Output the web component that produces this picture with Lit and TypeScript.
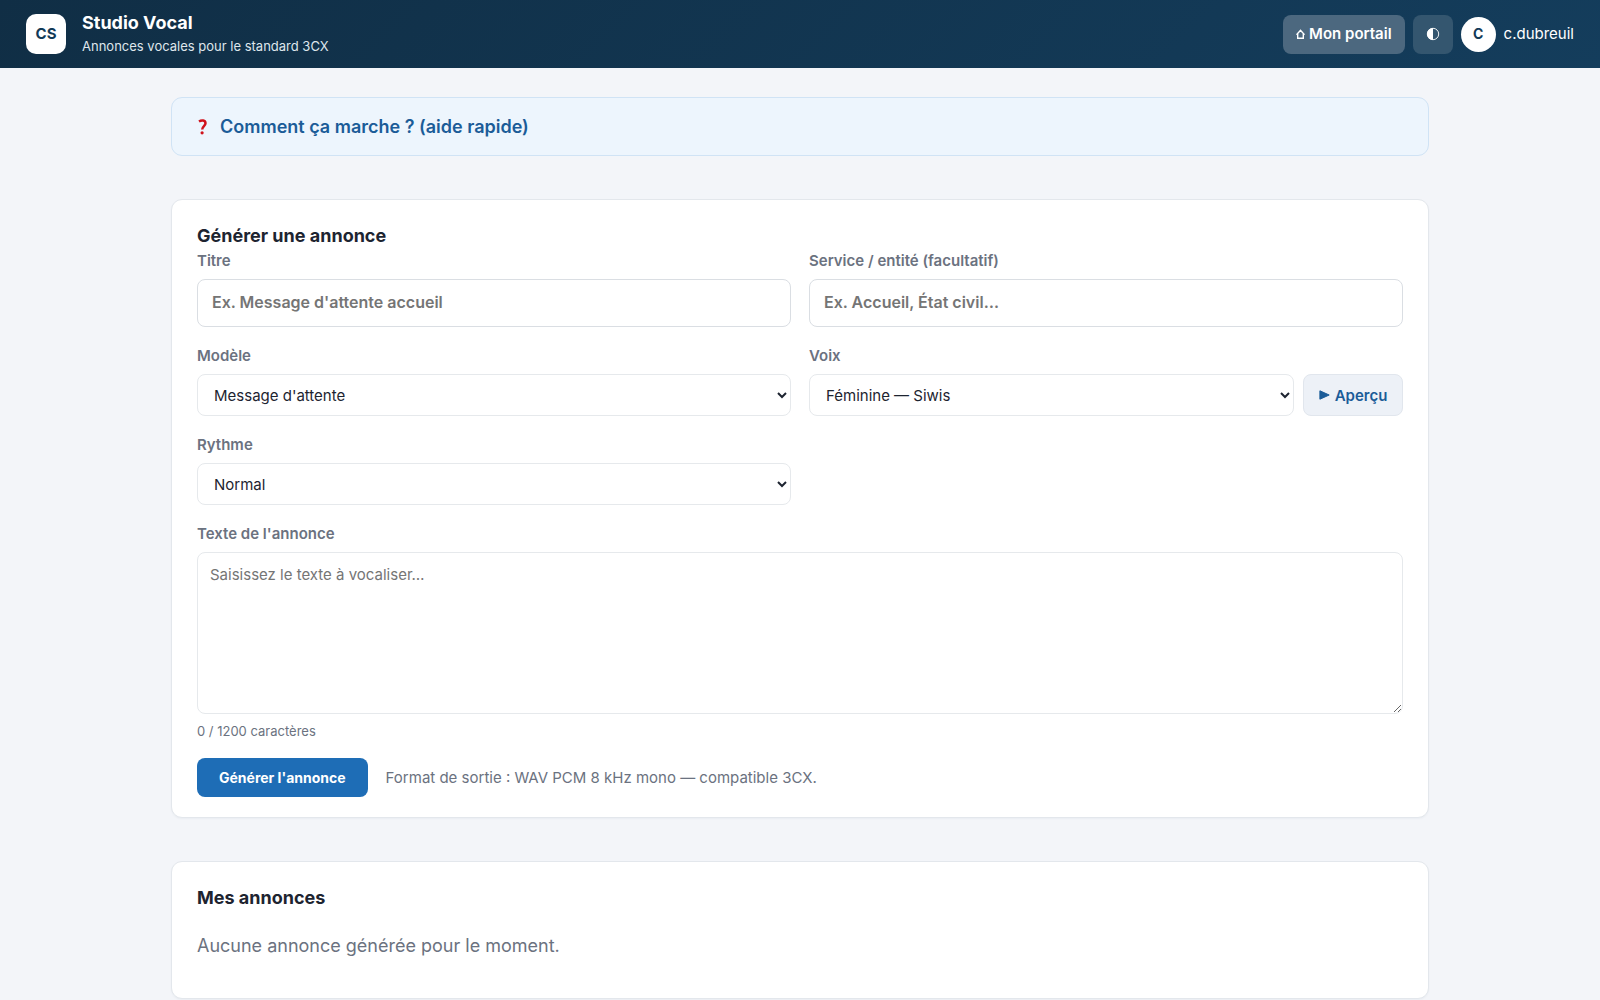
import { LitElement, html, css } from "lit";
import { customElement, state } from "lit/decorators.js";

const MAX_CHARS = 1200;

@customElement("app-root")
export class AppRoot extends LitElement {
  static styles = css`
    :host {
      display: block;
      min-height: 100vh;
      background: #f3f5f9;
      color: #1d2430;
      font-family: Inter, "Liberation Sans", sans-serif;
      font-size: 15px;
      line-height: 20px;
    }
    * { box-sizing: border-box; }
    h1, h2, p { margin: 0; }
    button, input, select, textarea { font-family: inherit; }

    .topbar {
      display: flex;
      align-items: center;
      justify-content: space-between;
      min-height: 68px;
      padding: 8px 26px;
      background: linear-gradient(135deg, #102e45, #143d5c);
      color: #fff;
    }
    .brand { display: flex; align-items: center; gap: 16px; }
    .logo {
      display: grid;
      place-items: center;
      width: 40px;
      height: 40px;
      border-radius: 10px;
      background: #fff;
      color: #123a57;
      font-weight: 700;
    }
    .brand-text { display: grid; gap: 1px; padding-bottom: 2px; }
    .brand-title { font-size: 18px; line-height: 24px; font-weight: 700; }
    .brand-sub { font-size: 13px; color: #dfe6ec; }
    .actions { display: flex; align-items: center; gap: 8px; }
    .portal, .theme {
      display: flex;
      align-items: center;
      justify-content: center;
      gap: 4px;
      height: 39px;
      border: 0;
      border-radius: 8px;
      color: #fff;
      font-size: 15px;
      font-weight: 600;
      text-decoration: none;
    }
    .portal { padding: 0 13px; background: #4c687f; }
    .theme { width: 40px; padding: 0; background: #34566f; }
    .user { display: flex; align-items: center; gap: 8px; }
    .avatar {
      display: grid;
      place-items: center;
      width: 35px;
      height: 35px;
      border-radius: 50%;
      background: #fff;
      color: #123a57;
      font-size: 14px;
      font-weight: 700;
    }

    .page {
      display: flex;
      flex-direction: column;
      gap: 43px;
      max-width: 1306px;
      margin: 0 auto;
      padding: 29px 24px 0;
    }
    .help {
      border: 1px solid #d0e3f5;
      border-radius: 11px;
      background: #edf5fd;
    }
    .help-title {
      display: flex;
      align-items: center;
      gap: 13px;
      padding: 17px 26px 16px;
      color: #1b5c98;
      font-size: 18px;
      line-height: 24px;
      font-weight: 600;
      list-style: none;
      cursor: pointer;
    }
    .help-body { padding: 0 26px 17px; }
    .card {
      padding: 24px 25px 20px;
      border: 1px solid #e3e7ec;
      border-radius: 11px;
      background: #fff;
      box-shadow: 0 1px 2px rgba(16, 46, 69, 0.04);
    }
    .card-title { font-size: 18px; line-height: 24px; font-weight: 700; }
    .grid {
      display: grid;
      grid-template-columns: 1fr 1fr;
      gap: 20px 18px;
      margin-top: 4px;
    }
    .field { display: grid; gap: 9px; }
    .wide { grid-column: 1 / -1; }
    .label {
      color: #6b7280;
      font-size: 15px;
      line-height: 18px;
      font-weight: 600;
    }
    .input, .select, .textarea {
      width: 100%;
      border: 1px solid #e6e9ec;
      border-radius: 8px;
      background: #fff;
      color: #1d2430;
      font-size: 15px;
    }
    .input {
      height: 48px;
      padding: 0 14px 2px;
      border-color: #dadee3;
      font-size: 16px;
      font-weight: 600;
    }
    .input::placeholder, .textarea::placeholder { color: #757575; }
    .select { height: 42px; padding: 0 0 0 12px; }
    .voice { display: flex; gap: 9px; }
    .preview {
      display: flex;
      align-items: center;
      justify-content: center;
      flex: none;
      gap: 5px;
      width: 100px;
      border: 1px solid #e1e6ed;
      border-radius: 8px;
      background: #edf1f7;
      color: #1b5c98;
      font-size: 15px;
      font-weight: 600;
    }
    .textarea {
      display: block;
      height: 162px;
      padding: 12px;
      line-height: 20px;
      resize: vertical;
    }
    .counter {
      margin-top: 8px;
      color: #6b7280;
      font-size: 13px;
      line-height: 18px;
    }
    .submit-row { display: flex; align-items: center; gap: 18px; margin-top: 18px; }
    .submit {
      height: 39px;
      padding: 0 22px;
      border: 0;
      border-radius: 8px;
      background: #1e6db6;
      color: #fff;
      font-size: 14px;
      font-weight: 700;
    }
    .hint { color: #6b7280; }
    .empty {
      margin: 24px 0 20px;
      color: #6b7280;
      font-size: 18px;
      line-height: 24px;
    }
  `;

  @state() private text = "";

  private onText(e: Event) {
    this.text = (e.target as HTMLTextAreaElement).value;
  }

  render() {
    return html`
      <header class="topbar">
        <div class="brand">
          <div class="logo">CS</div>
          <div class="brand-text">
            <h1 class="brand-title">Studio Vocal</h1>
            <p class="brand-sub">Annonces vocales pour le standard 3CX</p>
          </div>
        </div>
        <div class="actions">
          <a class="portal" href="#portail">
            <svg width="9" height="10" viewBox="0 0 9 10" fill="none" stroke="currentColor" stroke-width="1.4" aria-hidden="true">
              <path d="M1.700 5v4.200h5.600V5M.5 5.700 4.500 1.200l4 4.500" />
            </svg>
            Mon portail
          </a>
          <button class="theme" type="button" aria-label="Thème">
            <svg width="14" height="14" viewBox="0 0 14 14" aria-hidden="true">
              <circle cx="7" cy="7" r="5.700" fill="none" stroke="currentColor" stroke-width=".9" />
              <path d="M7 1a6 6 0 0 0 0 12z" fill="currentColor" />
            </svg>
          </button>
          <div class="user">
            <span class="avatar">C</span>
            <span>c.dubreuil</span>
          </div>
        </div>
      </header>

      <main class="page">
        <details class="help">
          <summary class="help-title">
            <svg width="9" height="16" viewBox="0 0 9 16" aria-hidden="true">
              <path d="M1 2.500C3.500.9 7.500 1.100 7.500 4.300c0 2.700-3.300 2.900-3.300 6.200" fill="none" stroke="#d0121b" stroke-width="2.500" />
              <circle cx="4.100" cy="13.800" r="1.600" fill="#d0121b" />
            </svg>
            Comment ça marche ? (aide rapide)
          </summary>
          <p class="help-body">Saisissez le texte à vocaliser, choisissez une voix, puis générez l'annonce.</p>
        </details>

        <section class="card">
          <h2 class="card-title">Générer une annonce</h2>
          <div class="grid">
            <div class="field">
              <label class="label" for="titre">Titre</label>
              <input class="input" id="titre" type="text" placeholder="Ex. Message d'attente accueil" />
            </div>
            <div class="field">
              <label class="label" for="service">Service / entité (facultatif)</label>
              <input class="input" id="service" type="text" placeholder="Ex. Accueil, État civil…" />
            </div>
            <div class="field">
              <label class="label" for="modele">Modèle</label>
              <select class="select" id="modele"><option>Message d'attente</option></select>
            </div>
            <div class="field">
              <label class="label" for="voix">Voix</label>
              <div class="voice">
                <select class="select" id="voix"><option>Féminine — Siwis</option></select>
                <button class="preview" type="button">
                  <svg width="11" height="10" viewBox="0 0 11 10" aria-hidden="true">
                    <path d="M.9.8 10.200 5 .9 9.200z" fill="currentColor" stroke="currentColor" stroke-linejoin="round" />
                  </svg>
                  Aperçu
                </button>
              </div>
            </div>
            <div class="field">
              <label class="label" for="rythme">Rythme</label>
              <select class="select" id="rythme"><option>Normal</option></select>
            </div>
            <div class="field wide">
              <label class="label" for="texte">Texte de l'annonce</label>
              <textarea
                class="textarea"
                id="texte"
                maxlength=${MAX_CHARS}
                placeholder="Saisissez le texte à vocaliser…"
                @input=${this.onText}
              ></textarea>
            </div>
          </div>
          <p class="counter">${this.text.length} / ${MAX_CHARS} caractères</p>
          <div class="submit-row">
            <button class="submit" type="button">Générer l'annonce</button>
            <p class="hint">Format de sortie : WAV PCM 8 kHz mono — compatible 3CX.</p>
          </div>
        </section>

        <section class="card">
          <h2 class="card-title">Mes annonces</h2>
          <p class="empty">Aucune annonce générée pour le moment.</p>
        </section>
      </main>
    `;
  }
}
